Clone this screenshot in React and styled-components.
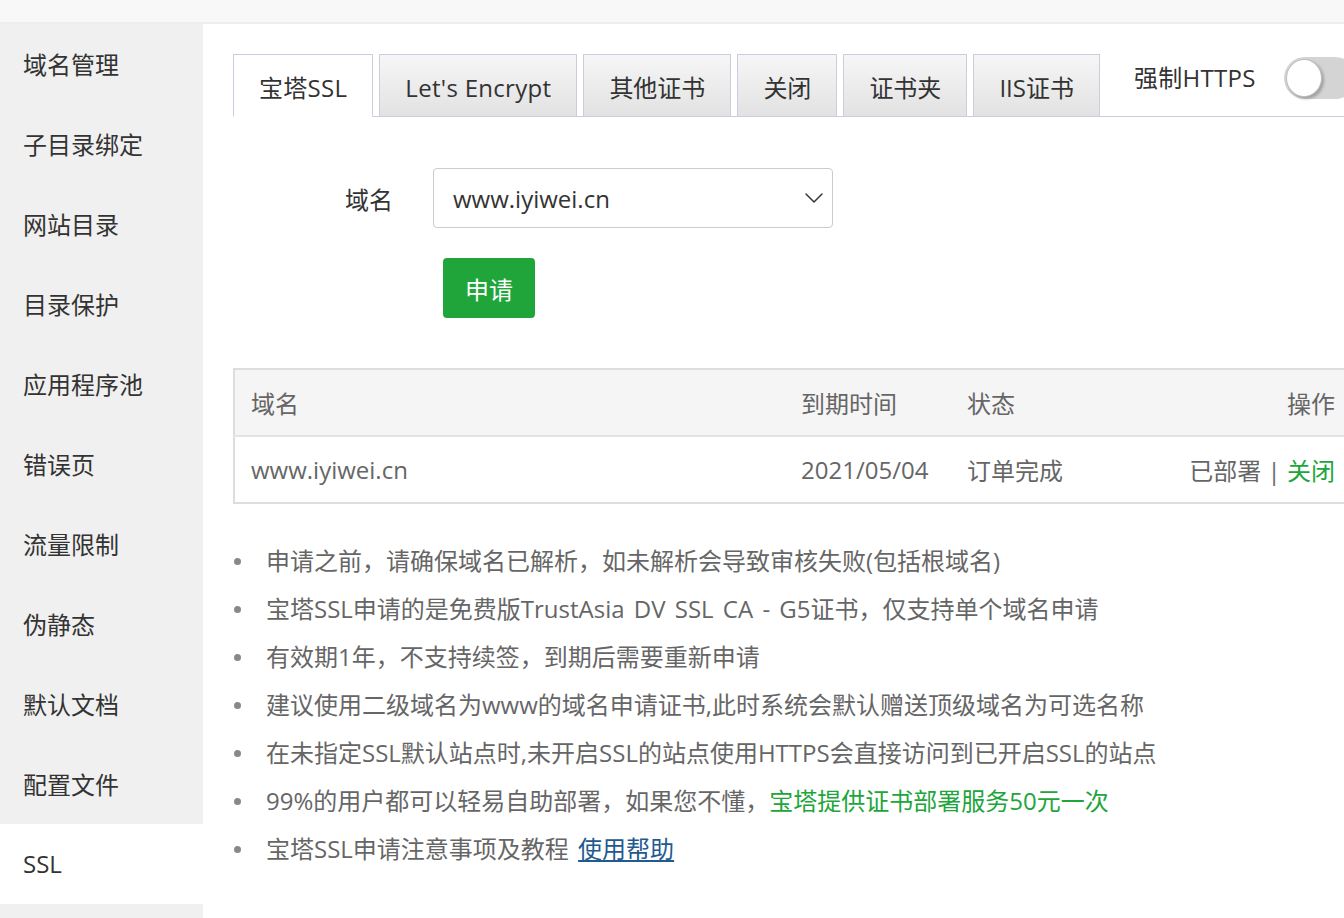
import React from 'react'
import styled, { createGlobalStyle } from 'styled-components'
import { ChevronDown } from 'lucide-react'

const GlobalStyle = createGlobalStyle`
  html, body {
    margin: 0;
    padding: 0;
    background: #fff;
  }
  body {
    width: 1344px;
    height: 918px;
    overflow: hidden;
    font-family: "Open Sans", "Noto Sans CJK SC", sans-serif;
    color: #333;
  }
  * { box-sizing: border-box; }
`

const Page = styled.div`
  display: flex;
  flex-direction: column;
  width: 1344px;
  height: 918px;
  overflow: hidden;
`

const TopBar = styled.div`
  height: 24px;
  flex: none;
  background: #f8f8f8;
  border-bottom: 2px solid #eeeeee;
`

const Body = styled.div`
  flex: 1;
  display: flex;
  min-height: 0;
`

const Sidebar = styled.nav`
  width: 203px;
  flex: none;
  background: #f0f0f0;
  display: flex;
  flex-direction: column;
`

const NavItem = styled.div`
  height: 80px;
  flex: none;
  display: flex;
  align-items: center;
  padding: 0 0 2px 23px;
  font-size: 24px;
  color: #333;
  background: ${({ $active }) => ($active ? '#fff' : 'transparent')};
`

const Main = styled.main`
  flex: 1;
  min-width: 0;
  padding: 30px 0 0 30px;
  overflow: hidden;
`

const Content = styled.div`
  width: 1120px;
`

const TabBar = styled.div`
  display: flex;
  height: 63px;
  border-bottom: 1px solid #cdcbdc;
`

const Tab = styled.div`
  flex: none;
  height: 63px;
  margin-bottom: -1px;
  margin-right: 6px;
  padding: 4px 25px 0;
  display: flex;
  align-items: center;
  white-space: nowrap;
  font-size: 24px;
  line-height: 32px;
  letter-spacing: ${({ $latin }) => ($latin ? '0.3px' : '0')};
  color: #333;
  border: 1px solid #cdcbdc;
  border-bottom-color: ${({ $active }) => ($active ? '#fff' : '#cdcbdc')};
  background: ${({ $active }) =>
    $active ? '#fff' : 'linear-gradient(to bottom, #f6f6f6, #e2e2e2)'};
`

const ForceWrap = styled.div`
  flex: none;
  height: 48px;
  display: flex;
  align-items: center;
  gap: 28px;
  margin-left: 28px;
  white-space: nowrap;
`

const ForceLabel = styled.span`
  font-size: 24px;
  line-height: 32px;
  color: #333;
  letter-spacing: 0.3px;
`

const Toggle = styled.div`
  position: relative;
  width: 72px;
  height: 42px;
  border-radius: 21px;
  background: #d4d4d4;
  flex: none;
`

const Knob = styled.span`
  position: absolute;
  left: 2px;
  top: 2px;
  width: 36px;
  height: 38px;
  border-radius: 50%;
  background: #fff;
  border: 1px solid #bdbdbd;
  box-shadow: 2px 2px 3px rgba(0, 0, 0, 0.25);
`

const FormRow = styled.div`
  display: flex;
  align-items: center;
  margin-top: 51px;
`

const Label = styled.label`
  width: 200px;
  padding-right: 40px;
  text-align: right;
  font-size: 24px;
  color: #333;
`

const Select = styled.div`
  width: 400px;
  height: 60px;
  border: 1px solid #cccccc;
  border-radius: 4px;
  padding: 0 2px 0 19px;
  display: flex;
  align-items: center;
  justify-content: space-between;
  font-size: 24px;
  color: #333;
`

const ButtonRow = styled.div`
  margin-top: 30px;
  padding-left: 210px;
`

const Button = styled.button`
  width: 92px;
  height: 60px;
  border: none;
  border-radius: 4px;
  background: #20a53a;
  color: #fff;
  font-family: inherit;
  font-size: 24px;
  padding: 0;
`

const Table = styled.table`
  margin-top: 50px;
  width: 1120px;
  table-layout: fixed;
  border-collapse: collapse;
  border: 2px solid #dddddd;
  font-size: 24px;
  color: #666;
`

const Th = styled.th`
  text-align: ${({ $right }) => ($right ? 'right' : 'left')};
  font-weight: normal;
  background: #f5f5f5;
  height: 67px;
  padding: 0 16px;
  border-bottom: 2px solid #e4e4e4;
`

const Td = styled.td`
  text-align: ${({ $right }) => ($right ? 'right' : 'left')};
  height: 67px;
  padding: 0 16px;
  white-space: nowrap;
`

const Green = styled.span`
  color: #20a53a;
`

const Tips = styled.ul`
  list-style: none;
  margin: 33px 0 0;
  padding: 0;
`

const Tip = styled.li`
  position: relative;
  padding-left: 33px;
  font-size: 24px;
  line-height: 48px;
  color: #666;
  white-space: nowrap;
  word-spacing: 3px;

  &::before {
    content: '';
    position: absolute;
    left: 1px;
    top: 21px;
    width: 7px;
    height: 7px;
    border-radius: 50%;
    background: #888;
  }
`

const HelpLink = styled.a`
  color: #225a8f;
  text-decoration: underline;
`

const navItems = [
  '域名管理',
  '子目录绑定',
  '网站目录',
  '目录保护',
  '应用程序池',
  '错误页',
  '流量限制',
  '伪静态',
  '默认文档',
  '配置文件',
  'SSL',
  '',
]

const tabs = ['宝塔SSL', "Let's Encrypt", '其他证书', '关闭', '证书夹', 'IIS证书']

export default function App() {
  return (
    <>
      <GlobalStyle />
      <Page>
        <TopBar />
        <Body>
          <Sidebar>
            {navItems.map((item, i) => (
              <NavItem key={i} $active={item === 'SSL'}>
                {item}
              </NavItem>
            ))}
          </Sidebar>
          <Main>
            <Content>
              <TabBar>
                {tabs.map((t, i) => (
                  <Tab key={t} $active={i === 0} $latin={i < 2}>
                    {t}
                  </Tab>
                ))}
                <ForceWrap>
                  <ForceLabel>强制HTTPS</ForceLabel>
                  <Toggle>
                    <Knob />
                  </Toggle>
                </ForceWrap>
              </TabBar>

              <FormRow>
                <Label>域名</Label>
                <Select>
                  <span>www.iyiwei.cn</span>
                  <ChevronDown size={32} strokeWidth={1.1} color="#333" />
                </Select>
              </FormRow>
              <ButtonRow>
                <Button>申请</Button>
              </ButtonRow>

              <Table>
                <colgroup>
                  <col style={{ width: 551 }} />
                  <col style={{ width: 166 }} />
                  <col style={{ width: 200 }} />
                  <col />
                </colgroup>
                <thead>
                  <tr>
                    <Th>域名</Th>
                    <Th>到期时间</Th>
                    <Th>状态</Th>
                    <Th $right>操作</Th>
                  </tr>
                </thead>
                <tbody>
                  <tr>
                    <Td>www.iyiwei.cn</Td>
                    <Td>2021/05/04</Td>
                    <Td>订单完成</Td>
                    <Td $right>
                      已部署 | <Green>关闭</Green>
                    </Td>
                  </tr>
                </tbody>
              </Table>

              <Tips>
                <Tip>申请之前，请确保域名已解析，如未解析会导致审核失败(包括根域名)</Tip>
                <Tip>宝塔SSL申请的是免费版TrustAsia DV SSL CA - G5证书，仅支持单个域名申请</Tip>
                <Tip>有效期1年，不支持续签，到期后需要重新申请</Tip>
                <Tip>建议使用二级域名为www的域名申请证书,此时系统会默认赠送顶级域名为可选名称</Tip>
                <Tip>在未指定SSL默认站点时,未开启SSL的站点使用HTTPS会直接访问到已开启SSL的站点</Tip>
                <Tip>
                  99%的用户都可以轻易自助部署，如果您不懂，<Green>宝塔提供证书部署服务50元一次</Green>
                </Tip>
                <Tip>
                  宝塔SSL申请注意事项及教程 <HelpLink href="#">使用帮助</HelpLink>
                </Tip>
              </Tips>
            </Content>
          </Main>
        </Body>
      </Page>
    </>
  )
}
